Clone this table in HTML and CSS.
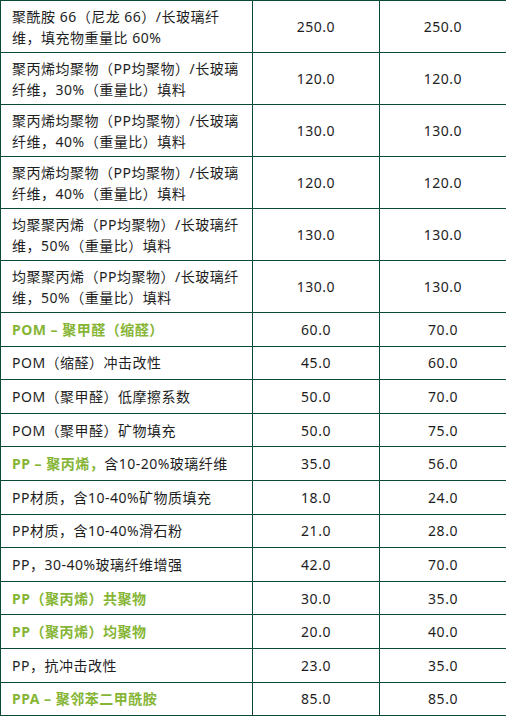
FILE: index.html
```html
<!DOCTYPE html>
<html lang="zh-CN">
<head>
<meta charset="utf-8">
<title>Table</title>
<link rel="stylesheet" href="styles.css">
</head>
<body>
<table class="data">
  <colgroup>
    <col class="c-name">
    <col class="c-val">
    <col class="c-val2">
  </colgroup>
  <tbody>
    <tr class="r2"><td>聚酰胺 66（尼龙 66）/长玻璃纤维，填充物重量比 60%</td><td class="num">250.0</td><td class="num">250.0</td></tr>
    <tr class="r2"><td>聚丙烯均聚物（PP均聚物）/长玻璃纤维，30%（重量比）填料</td><td class="num">120.0</td><td class="num">120.0</td></tr>
    <tr class="r2"><td>聚丙烯均聚物（PP均聚物）/长玻璃纤维，40%（重量比）填料</td><td class="num">130.0</td><td class="num">130.0</td></tr>
    <tr class="r2"><td>聚丙烯均聚物（PP均聚物）/长玻璃纤维，40%（重量比）填料</td><td class="num">120.0</td><td class="num">120.0</td></tr>
    <tr class="r2"><td>均聚聚丙烯（PP均聚物）/长玻璃纤维，50%（重量比）填料</td><td class="num">130.0</td><td class="num">130.0</td></tr>
    <tr class="r2"><td>均聚聚丙烯（PP均聚物）/长玻璃纤维，50%（重量比）填料</td><td class="num">130.0</td><td class="num">130.0</td></tr>
    <tr class="r1"><td><span class="hl">POM – 聚甲醛（缩醛）</span></td><td class="num">60.0</td><td class="num">70.0</td></tr>
    <tr class="r1"><td>POM（缩醛）冲击改性</td><td class="num">45.0</td><td class="num">60.0</td></tr>
    <tr class="r1"><td>POM（聚甲醛）低摩擦系数</td><td class="num">50.0</td><td class="num">70.0</td></tr>
    <tr class="r1"><td>POM（聚甲醛）矿物填充</td><td class="num">50.0</td><td class="num">75.0</td></tr>
    <tr class="r1"><td><span class="hl">PP – 聚丙烯，</span>含10-20%玻璃纤维</td><td class="num">35.0</td><td class="num">56.0</td></tr>
    <tr class="r1"><td>PP材质，含10-40%矿物质填充</td><td class="num">18.0</td><td class="num">24.0</td></tr>
    <tr class="r1"><td>PP材质，含10-40%滑石粉</td><td class="num">21.0</td><td class="num">28.0</td></tr>
    <tr class="r1"><td>PP，30-40%玻璃纤维增强</td><td class="num">42.0</td><td class="num">70.0</td></tr>
    <tr class="r1"><td><span class="hl">PP（聚丙烯）共聚物</span></td><td class="num">30.0</td><td class="num">35.0</td></tr>
    <tr class="r1"><td><span class="hl">PP（聚丙烯）均聚物</span></td><td class="num">20.0</td><td class="num">40.0</td></tr>
    <tr class="r1"><td>PP，抗冲击改性</td><td class="num">23.0</td><td class="num">35.0</td></tr>
    <tr class="r1"><td><span class="hl">PPA – 聚邻苯二甲酰胺</span></td><td class="num">85.0</td><td class="num">85.0</td></tr>
  </tbody>
</table>
</body>
</html>
```
FILE: styles.css
```css
html, body {
  margin: 0;
  padding: 0;
  background: #ffffff;
}

body {
  font-family: "Noto Sans", "Noto Sans CJK SC", sans-serif;
  font-size: 14px;
  letter-spacing: 0.5px;
  color: #1e1e1e;
}

.data {
  width: 506px;
  table-layout: fixed;
  border-collapse: collapse;
}

.c-name { width: 252px; }
.c-val { width: 127px; }
.c-val2 { width: 127px; }

.data td {
  border: 1px solid #0b4a3a;
  padding: 0 10px 0 11px;
  line-height: 21px;
  vertical-align: middle;
}

.r2 { height: 52px; }
.r1 { height: 33.6px; }

.data td.num {
  text-align: center;
  padding: 0;
}

.hl {
  color: #86b535;
  font-weight: 700;
}
```
